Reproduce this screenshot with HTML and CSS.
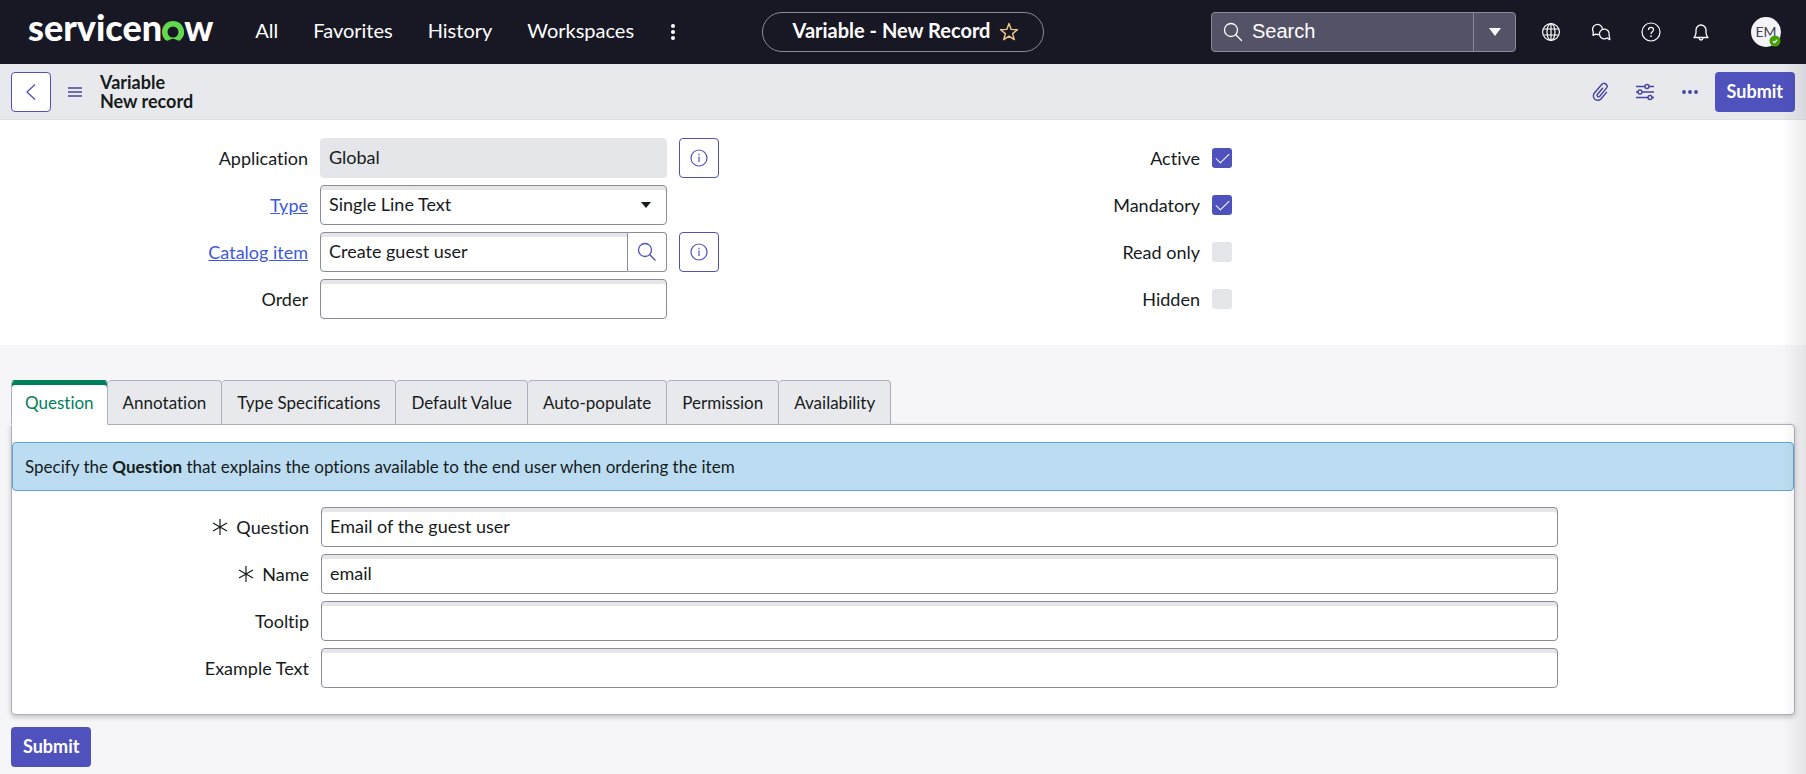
FILE: index.html
```html
<!DOCTYPE html>
<html lang="en">
<head>
    <meta charset="UTF-8">
    <meta name="viewport" content="width=device-width, initial-scale=1.0">
    <title>Variable - New Record | ServiceNow</title>
    <link rel="stylesheet" href="styles.css">
</head>
<body>
    <header class="topbar">
        <div class="topbar-left">
            <a href="#" class="logo" aria-label="servicenow home"><span>servicen</span><svg class="logo-o" width="22" height="20" viewBox="0 0 22 20"><path fill="#62d84e" d="M11 0C4.900 0 0 4.900 0 11c0 3.100 1.300 6 3.500 8.100.9.800 2.200.9 3.200.2a7.200 7.200 0 0 1 8.600 0c1 .7 2.300.6 3.200-.2A11 11 0 0 0 11 0zm0 16.500a5.400 5.400 0 0 1-5.500-5.500 5.500 5.500 0 1 1 11 0 5.400 5.400 0 0 1-5.500 5.500z"/></svg><span>w</span></a>
            <nav class="main-nav">
                <a href="#">All</a>
                <a href="#">Favorites</a>
                <a href="#">History</a>
                <a href="#">Workspaces</a>
            </nav>
            <button type="button" class="bar-btn" aria-label="More menus">
                <svg width="6" height="18" viewBox="0 0 6 18" fill="#fff"><circle cx="3" cy="3" r="2"/><circle cx="3" cy="9" r="2"/><circle cx="3" cy="15" r="2"/></svg>
            </button>
        </div>

        <div class="page-pill">
            <span>Variable - New Record</span>
            <button type="button" class="bar-btn" aria-label="Add to favorites">
                <svg width="20" height="20" viewBox="0 0 20 20" fill="none" stroke="#f0c98a" stroke-width="1.400" stroke-linejoin="round"><path d="M10 1.500l2.200 5.900 6.300.3-4.900 3.900 1.700 6.100-5.300-3.500-5.300 3.500 1.700-6.100-4.900-3.900 6.300-.3z"/></svg>
            </button>
        </div>

        <div class="topbar-right">
            <form class="search">
                <svg class="search-icon" width="20" height="20" viewBox="0 0 20 20" fill="none" stroke="#fff" stroke-width="1.300" stroke-linecap="round"><circle cx="8" cy="8" r="6.500"/><path d="M12.800 12.800l5.700 5.700"/></svg>
                <input type="text" class="search-input" placeholder="Search" aria-label="Search">
                <button type="button" class="search-drop" aria-label="Search options">
                    <svg width="14" height="8" viewBox="0 0 14 8" fill="#fff"><path d="M1 0h12L7 8z"/></svg>
                </button>
            </form>
            <button type="button" class="bar-btn" aria-label="Scope">
                <svg width="20" height="20" viewBox="0 0 20 20" fill="none" stroke="#fff" stroke-width="1.200"><circle cx="10" cy="10" r="8.400"/><ellipse cx="10" cy="10" rx="4" ry="8.400"/><path d="M10 1.600v16.800M2.500 7h15M2.500 13h15"/></svg>
            </button>
            <button type="button" class="bar-btn" aria-label="Conversations">
                <svg width="20" height="20" viewBox="0 0 20 20" fill="none" stroke="#fff" stroke-width="1.300" stroke-linejoin="round"><path d="M8 12.300a5 5 0 0 1-3.300-.2l-2.700 1.200.3-3.200A5 5 0 1 1 11.500 6.800"/><path d="M18.100 13a4.900 4.900 0 1 0-2 3l2.700 1.600z"/></svg>
            </button>
            <button type="button" class="bar-btn" aria-label="Help">
                <svg width="20" height="20" viewBox="0 0 20 20" fill="none" stroke="#fff" stroke-width="1.200"><circle cx="10" cy="10" r="9"/><path d="M7.500 8c0-1.600 1.100-2.600 2.500-2.600s2.500 1 2.500 2.400c0 1.900-2.500 2-2.500 4.200"/><path d="M10 13.500v1.500" stroke-width="1.500"/></svg>
            </button>
            <button type="button" class="bar-btn" aria-label="Notifications">
                <svg width="20" height="20" viewBox="0 0 20 20" fill="none" stroke="#fff" stroke-width="1.300" stroke-linejoin="round"><path d="M3 15.500c1.300-1.300 2-2.500 2-5V8a5 5 0 0 1 10 0v2.500c0 2.500.7 3.700 2 5z"/><path d="M8 16c.2 1.200 1 2 2 2s1.800-.8 2-2"/></svg>
            </button>
            <button type="button" class="avatar" aria-label="User menu">
                EM
                <svg class="avatar-status" width="12" height="12" viewBox="0 0 12 12"><circle cx="6" cy="6" r="5.500" fill="#45a10a"/><path d="M4 6.200l1.500 1.400L8.200 4.800" fill="none" stroke="#fff" stroke-width="1.300"/></svg>
            </button>
        </div>
    </header>

    <div class="form-header">
        <button type="button" class="icon-btn" aria-label="Back">
            <svg width="12" height="18" viewBox="0 0 12 18" fill="none" stroke="#4f52bd" stroke-width="1.300"><path d="M10 1.500L2 9l8 7.500"/></svg>
        </button>
        <button type="button" class="plain-btn menu-btn" aria-label="Form menu">
            <svg width="14" height="10" viewBox="0 0 14 10" stroke="#4543a0" stroke-width="1.400"><path d="M0 1h14M0 5h14M0 9h14"/></svg>
        </button>
        <h1 class="form-title">Variable<br>New record</h1>
        <div class="form-actions">
            <button type="button" class="plain-btn" aria-label="Attachments">
                <svg width="20" height="20" viewBox="0 0 20 20" fill="none" stroke="#4543a0" stroke-width="1.400" stroke-linecap="round"><path d="M12.600 6.200l-5.300 6.300a1.500 1.500 0 0 0 2.300 1.900l6.700-8a3 3 0 0 0-4.600-3.900L4.400 11a4.400 4.400 0 0 0 6.800 5.700l5.300-6.300"/></svg>
            </button>
            <button type="button" class="plain-btn" aria-label="Personalize form">
                <svg width="20" height="20" viewBox="0 0 20 20" fill="none" stroke="#4543a0" stroke-width="1.400"><path d="M1 4.500h9M14 4.500h5M1 10h2M7 10h12M1 15.500h12M17 15.500h2"/><circle cx="12" cy="4.500" r="2"/><circle cx="5" cy="10" r="2"/><circle cx="15" cy="15.500" r="2"/></svg>
            </button>
            <button type="button" class="plain-btn" aria-label="More options">
                <svg width="20" height="6" viewBox="0 0 20 6" fill="#4543a0"><circle cx="4" cy="3" r="1.900"/><circle cx="10" cy="3" r="1.900"/><circle cx="16" cy="3" r="1.900"/></svg>
            </button>
            <button type="submit" form="record" class="submit-btn">Submit</button>
        </div>
    </div>

    <form id="record">
        <div class="form-top">
            <div class="column">
                <div class="row">
                    <label for="application">Application</label>
                    <input type="text" id="application" class="field" value="Global" readonly>
                    <button type="button" class="icon-btn" aria-label="Application info">
                        <svg width="18" height="18" viewBox="0 0 18 18" fill="none" stroke="#4f52bd" stroke-width="1.200"><circle cx="9" cy="9" r="8"/><path d="M9 7.500v5.500M9 4.800v1.500"/></svg>
                    </button>
                </div>
                <div class="row">
                    <label for="type"><a href="#">Type</a></label>
                    <div class="select-wrap">
                        <select id="type" class="field">
                            <option>Single Line Text</option>
                            <option>Multi Line Text</option>
                            <option>Select Box</option>
                            <option>CheckBox</option>
                            <option>Reference</option>
                        </select>
                        <svg class="select-arrow" width="10" height="6" viewBox="0 0 10 6" fill="#161b1c"><path d="M0 0h10L5 6z"/></svg>
                    </div>
                </div>
                <div class="row">
                    <label for="catalog-item"><a href="#">Catalog item</a></label>
                    <div class="lookup">
                        <input type="text" id="catalog-item" class="field" value="Create guest user">
                        <button type="button" class="lookup-btn" aria-label="Look up catalog item">
                            <svg width="20" height="20" viewBox="0 0 20 20" fill="none" stroke="#4f52bd" stroke-width="1.300"><circle cx="8" cy="8" r="6.500"/><path d="M12.800 12.800l5.700 5.700"/></svg>
                        </button>
                    </div>
                    <button type="button" class="icon-btn" aria-label="Catalog item info">
                        <svg width="18" height="18" viewBox="0 0 18 18" fill="none" stroke="#4f52bd" stroke-width="1.200"><circle cx="9" cy="9" r="8"/><path d="M9 7.500v5.500M9 4.800v1.500"/></svg>
                    </button>
                </div>
                <div class="row">
                    <label for="order">Order</label>
                    <input type="text" id="order" class="field">
                </div>
            </div>
            <div class="column">
                <div class="row">
                    <label for="active">Active</label>
                    <input type="checkbox" id="active" class="check" checked>
                </div>
                <div class="row">
                    <label for="mandatory">Mandatory</label>
                    <input type="checkbox" id="mandatory" class="check" checked>
                </div>
                <div class="row">
                    <label for="read-only">Read only</label>
                    <input type="checkbox" id="read-only" class="check">
                </div>
                <div class="row">
                    <label for="hidden">Hidden</label>
                    <input type="checkbox" id="hidden" class="check">
                </div>
            </div>
        </div>

        <div class="tabs" role="tablist">
            <button type="button" role="tab" class="tab active" aria-selected="true">Question</button>
            <button type="button" role="tab" class="tab">Annotation</button>
            <button type="button" role="tab" class="tab">Type Specifications</button>
            <button type="button" role="tab" class="tab">Default Value</button>
            <button type="button" role="tab" class="tab">Auto-populate</button>
            <button type="button" role="tab" class="tab">Permission</button>
            <button type="button" role="tab" class="tab">Availability</button>
        </div>

        <section class="panel">
            <p class="info">Specify the <strong>Question</strong> that explains the options available to the end user when ordering the item</p>
            <div class="column wide">
                <div class="row">
                    <label for="question"><svg class="required" width="16" height="16" viewBox="0 0 16 16" stroke="#161b1c" stroke-width="1.200"><path d="M8 0v16M1 4l14 8M15 4L1 12"/></svg>Question</label>
                    <input type="text" id="question" class="field" value="Email of the guest user">
                </div>
                <div class="row">
                    <label for="name"><svg class="required" width="16" height="16" viewBox="0 0 16 16" stroke="#161b1c" stroke-width="1.200"><path d="M8 0v16M1 4l14 8M15 4L1 12"/></svg>Name</label>
                    <input type="text" id="name" class="field" value="email">
                </div>
                <div class="row">
                    <label for="tooltip">Tooltip</label>
                    <input type="text" id="tooltip" class="field">
                </div>
                <div class="row">
                    <label for="example-text">Example Text</label>
                    <input type="text" id="example-text" class="field">
                </div>
            </div>
        </section>

        <div class="form-footer">
            <button type="submit" class="submit-btn">Submit</button>
        </div>
    </form>
</body>
</html>
```

FILE: styles.css
```css
* {
    box-sizing: border-box;
}

body {
    margin: 0;
    font-family: Lato, "Liberation Sans", sans-serif;
    font-size: 18px;
    line-height: 24px;
    font-variant-ligatures: none;
    color: #161b1c;
    background: #f6f6f8;
}

button, input, select {
    margin: 0;
    font: inherit;
    font-variant-ligatures: none;
    color: inherit;
}

button {
    padding: 0;
    cursor: pointer;
}

svg {
    display: block;
    flex-shrink: 0;
}

/* Top navigation */
.topbar {
    display: grid;
    grid-template-columns: 1fr auto 1fr;
    align-items: center;
    height: 64px;
    padding: 0 25px;
    background: #181824;
    color: #fff;
}

.topbar-left,
.topbar-right {
    display: flex;
    align-items: center;
}

.topbar-right {
    justify-content: flex-end;
    gap: 30px;
}

.logo {
    display: flex;
    align-items: baseline;
    margin-right: 42px;
    padding: 0 0 10px 3px;
    font-size: 36px;
    line-height: 40px;
    font-weight: 900;
    color: #fff;
    text-decoration: none;
}

.main-nav {
    display: flex;
    gap: 35px;
    margin-right: 36px;
    padding-bottom: 4px;
}

.main-nav a {
    font-size: 20px;
    color: #fff;
    text-decoration: none;
}

.bar-btn {
    display: flex;
    border: none;
    background: none;
}

.page-pill {
    display: flex;
    align-items: center;
    gap: 9px;
    height: 40px;
    padding: 0 24px 0 30px;
    border: 1px solid #8a8a99;
    border-radius: 20px;
    font-size: 20px;
    font-weight: bold;
}

.page-pill span {
    padding-bottom: 4px;
}

.search {
    display: flex;
    align-items: center;
    width: 305px;
    height: 40px;
    margin-right: -5px;
    border: 1px solid #8a8a9a;
    border-radius: 4px;
    background: #545267;
}

.search-icon {
    margin-left: 11px;
}

.search-input {
    flex: 1;
    min-width: 0;
    padding: 0 9px 2px;
    border: none;
    outline: none;
    background: none;
    font-family: "Liberation Sans", Arial, sans-serif;
    font-size: 20px;
}

.search-input::placeholder {
    color: #fff;
}

.search-drop {
    display: flex;
    align-items: center;
    justify-content: center;
    align-self: stretch;
    width: 42px;
    border: none;
    border-left: 1px solid #8a8a9a;
    background: none;
}

.avatar {
    position: relative;
    width: 30px;
    height: 30px;
    margin-left: 10px;
    border: none;
    border-radius: 50%;
    background: #f4f4f8;
    font-size: 14px;
    color: #40404e;
}

.avatar-status {
    position: absolute;
    right: 0;
    bottom: 0;
}

/* Form header */
.form-header {
    display: flex;
    align-items: center;
    height: 56px;
    padding: 0 11px;
    border-bottom: 1px solid #dfe0e4;
    background: #e8e9ed;
}

.icon-btn {
    display: flex;
    align-items: center;
    justify-content: center;
    width: 40px;
    height: 40px;
    border: 1px solid #4f52bd;
    border-radius: 4px;
    background: #fff;
}

.plain-btn {
    display: flex;
    border: none;
    background: none;
}

.menu-btn {
    margin: 0 18px 0 17px;
}

.form-title {
    margin: 0;
    font-size: 18px;
    line-height: 19px;
    font-weight: bold;
}

.form-actions {
    display: flex;
    align-items: center;
    gap: 25px;
    margin-left: auto;
}

.form-actions .submit-btn {
    margin-left: -10px;
}

.submit-btn {
    min-width: 80px;
    height: 40px;
    padding: 0 12px 2px;
    border: none;
    border-radius: 4px;
    background: #4f52bd;
    color: #fff;
    font-weight: bold;
}

/* Record fields */
.form-top {
    display: grid;
    grid-template-columns: 1fr 1fr;
    padding: 18px 11px 26px;
    background: #fff;
}

.column {
    display: flex;
    flex-direction: column;
    gap: 7px;
}

.row {
    display: grid;
    grid-template-columns: 297fr 347fr 224fr;
    column-gap: 12px;
    align-items: center;
    min-height: 40px;
}

.wide .row {
    grid-template-columns: 297fr 1237fr 224fr;
}

.row label {
    display: flex;
    align-items: center;
    justify-content: flex-end;
}

.row label a {
    color: #3c59e0;
}

.required {
    margin-right: 8px;
}

.field {
    width: 100%;
    height: 40px;
    padding: 0 8px 2px;
    border: 1px solid #8b8b99;
    border-radius: 4px;
    background: #fff;
    box-shadow: inset 0 4px 0 #e6e6e9;
}

.field:read-only:not(select) {
    border-color: #e5e6ea;
    background: #e5e6ea;
}

.select-wrap {
    position: relative;
}

.select-wrap .field {
    display: block;
    appearance: none;
}

.select-arrow {
    position: absolute;
    right: 16px;
    top: 17px;
    pointer-events: none;
}

.lookup {
    display: flex;
}

.lookup .field {
    flex: 1;
    min-width: 0;
    border-radius: 4px 0 0 4px;
}

.lookup-btn {
    display: flex;
    align-items: center;
    justify-content: center;
    width: 39px;
    border: 1px solid #8b8b99;
    border-left: none;
    border-radius: 0 4px 4px 0;
    background: #fff;
}

.check {
    appearance: none;
    display: grid;
    place-items: center;
    width: 20px;
    height: 20px;
    border-radius: 3px;
    background: #e5e6ea;
}

.check:checked {
    background: #4f52bd;
}

.check:checked::after {
    content: "";
    width: 12px;
    height: 6px;
    margin-bottom: 4px;
    border-left: 1px solid #fff;
    border-bottom: 1px solid #fff;
    transform: rotate(-45deg);
}

/* Tabs */
.tabs {
    display: flex;
    padding: 35px 11px 0;
}

.tab {
    height: 45px;
    margin-bottom: -1px;
    padding: 0 15px;
    border: 1px solid #adafbf;
    border-left-width: 0;
    border-radius: 4px 4px 0 0;
    background: #e8e9ed;
    font-size: 17px;
}

.tab.active {
    z-index: 1;
    padding: 0 13px;
    border-left-width: 1px;
    border-top-color: #007f5b;
    border-bottom-color: #fff;
    background: #fff;
    box-shadow: inset 0 4px 0 #007f5b;
    color: #007f5b;
}

.panel {
    margin: 0 11px;
    padding: 17px 0 26px;
    border: 1px solid #adafbf;
    border-radius: 0 4px 4px 4px;
    background: #fff;
    box-shadow: 0 2px 5px rgba(24, 24, 36, 0.25);
}

.info {
    margin: 0 0 16px;
    padding: 12px 12px 11px;
    border: 1px solid #5fa3d3;
    border-radius: 4px;
    background: #bcddf1;
    font-size: 17px;
}

.form-footer {
    padding: 12px 11px 7px;
}

/* Soft shade along the right edge of the window */
body::after {
    content: "";
    position: fixed;
    top: 64px;
    right: 0;
    bottom: 0;
    width: 24px;
    background: linear-gradient(to right, rgba(24, 24, 36, 0), rgba(24, 24, 36, 0.08));
    pointer-events: none;
}
```
